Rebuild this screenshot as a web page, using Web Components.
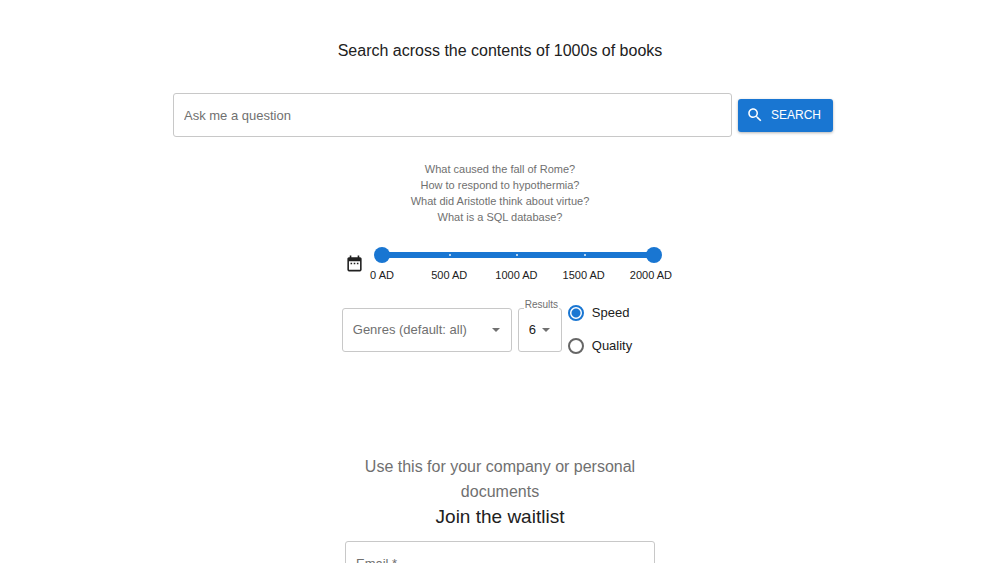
<!DOCTYPE html>
<html lang="en">
<head>
<meta charset="utf-8">
<meta name="viewport" content="width=device-width, initial-scale=1">
<title>Book search</title>
<style>
body {
  margin: 0;
  background: #fff;
  color: #212121;
  font-family: "Liberation Sans", Arial, Helvetica, sans-serif;
  --blue: #1976d2;
  --muted: #707070;
  --outline: #c8c8c8;
}
</style>
</head>
<body>
<book-search-page></book-search-page>

<script>
const base = `
  *, *::before, *::after { box-sizing: border-box; }
  input, select, button { font: inherit; color: inherit; margin: 0; }
`;

function define(name, html, setup) {
  const template = document.createElement('template');
  template.innerHTML = html;
  customElements.define(name, class extends HTMLElement {
    constructor() {
      super();
      this.attachShadow({ mode: 'open' }).append(template.content.cloneNode(true));
      if (setup) setup(this, this.shadowRoot);
    }
  });
}

define('outlined-input', `
  <style>${base}
    :host { display: block; }
    input {
      display: block; width: 100%; height: 44px; padding: 0 10px;
      border: 1px solid var(--outline); border-radius: 3px;
      background: transparent; font-size: 13px; outline-color: var(--blue);
    }
    input::placeholder { color: var(--muted); opacity: 1; }
  </style>
  <input type="text">
`, (host, root) => {
  const input = root.querySelector('input');
  const text = host.getAttribute('label');
  input.placeholder = text;
  input.setAttribute('aria-label', text);
  if (host.hasAttribute('type')) input.type = host.getAttribute('type');
});

define('search-button', `
  <style>${base}
    :host { display: block; }
    button {
      display: flex; align-items: center; gap: 7px; height: 33px; padding: 0 12px 0 8px;
      border: 0; border-radius: 3px; background: var(--blue); color: #fff;
      font-size: 12px; text-transform: uppercase; cursor: pointer;
      box-shadow: 0 1px 3px rgba(0,0,0,.3);
    }
    svg { width: 18px; height: 18px; fill: currentColor; }
  </style>
  <button type="submit">
    <svg viewBox="0 0 24 24" aria-hidden="true"><path d="M15.5 14h-.79l-.28-.27C15.41 12.59 16 11.11 16 9.5 16 5.91 13.09 3 9.5 3S3 5.91 3 9.5 5.91 16 9.5 16c1.61 0 3.09-.59 4.23-1.57l.27.28v.79l5 4.99L20.49 19l-4.99-5zm-6 0C7.01 14 5 11.99 5 9.5S7.01 5 9.5 5 14 7.01 14 9.5 11.99 14 9.5 14z"/></svg>
    <slot></slot>
  </button>
`);

define('sample-question', `
  <style>${base}
    :host { display: block; }
    button {
      display: block; border: 0; padding: 0; background: none; color: var(--muted);
      font-size: 11px; line-height: 16px; cursor: pointer;
    }
  </style>
  <button type="button"><slot></slot></button>
`);

define('year-range', `
  <style>${base}
    :host { display: block; }
    .slider { position: relative; height: 16px; }
    .track {
      position: absolute; inset: 5px 8px; border-radius: 3px; background: var(--blue);
    }
    .scale { display: grid; grid-template-columns: repeat(4, 500fr) 23fr; }
    .track .scale { height: 100%; align-items: center; }
    .tick { width: 2px; height: 2px; background: #b4d2ef; }
    .tick:first-child, .tick:last-child { visibility: hidden; }
    input {
      position: absolute; inset: 0; width: 100%; height: 16px;
      appearance: none; background: none; pointer-events: none;
    }
    input::-webkit-slider-thumb {
      appearance: none; width: 16px; height: 16px; border-radius: 50%;
      background: var(--blue); pointer-events: auto; cursor: pointer;
    }
    .labels { margin: 5px 8px 0; font-size: 11px; line-height: 14px; white-space: nowrap; }
    .labels span { display: flex; justify-content: center; width: 0; }
  </style>
  <div class="slider">
    <div class="track"><div class="scale">
      <i class="tick"></i><i class="tick"></i><i class="tick"></i><i class="tick"></i><i class="tick"></i>
    </div></div>
    <input type="range" min="0" max="2023" value="0" aria-label="Earliest year">
    <input type="range" min="0" max="2023" value="2023" aria-label="Latest year">
  </div>
  <div class="scale labels">
    <span>0 AD</span><span>500 AD</span><span>1000 AD</span><span>1500 AD</span><span>2000 AD</span>
  </div>
`, (host, root) => {
  const [low, high] = root.querySelectorAll('input');
  low.addEventListener('input', () => { if (+low.value > +high.value) low.value = high.value; });
  high.addEventListener('input', () => { if (+high.value < +low.value) high.value = low.value; });
});

const arrow = `<svg viewBox="0 0 10 5" aria-hidden="true"><path d="M0 0l5 5 5-5z"/></svg>`;
const selectStyle = `
  :host { display: block; }
  .box { display: grid; align-items: center; position: relative; }
  .box > select, .box > svg { grid-area: 1 / 1; }
  select {
    appearance: none; width: 100%; height: 44px; padding: 0 10px;
    border: 1px solid var(--outline); border-radius: 3px; background: transparent;
    font-size: 13px; outline-color: var(--blue);
  }
  svg { justify-self: end; width: 8px; height: 4px; margin-right: 12px; fill: #707070; pointer-events: none; }
`;

define('genre-select', `
  <style>${base}${selectStyle} select { color: var(--muted); }</style>
  <div class="box">
    <select aria-label="Genres">
      <option>Genres (default: all)</option><option>Fiction</option><option>History</option><option>Science</option>
    </select>${arrow}
  </div>
`);

define('results-select', `
  <style>${base}${selectStyle}
    label {
      position: absolute; top: -8px; left: 6px; padding: 0 1px; background: #fff;
      color: var(--muted); font-size: 10px; line-height: 10px;
    }
  </style>
  <div class="box">
    <select id="count"><option>6</option><option>9</option></select>${arrow}
    <label for="count">Results</label>
  </div>
`);

define('mode-choice', `
  <style>${base}
    :host { display: grid; gap: 17px; }
    label { display: flex; align-items: center; gap: 8px; font-size: 13px; line-height: 16px; }
    input {
      appearance: none; width: 16px; height: 16px; border: 2px solid #666;
      border-radius: 50%; background: #fff;
    }
    input:checked { border-color: var(--blue); background: radial-gradient(circle, var(--blue) 0 4px, #fff 5px); }
  </style>
  <label><input type="radio" name="mode" checked>Speed</label>
  <label><input type="radio" name="mode">Quality</label>
`);

define('waitlist-form', `
  <style>${base}
    :host { display: block; width: 310px; max-width: 100%; text-align: center; }
    p, h2 { margin: 0; line-height: 25px; font-weight: 400; }
    p { color: var(--muted); font-size: 16px; }
    h2 { font-size: 19px; margin-bottom: 12px; }
  </style>
  <p>Use this for your company or personal documents</p>
  <h2>Join the waitlist</h2>
  <outlined-input type="email" label="Email *"></outlined-input>
`);

define('book-search-page', `
  <style>${base}
    :host { display: block; }
    main { display: flex; flex-direction: column; align-items: center; padding-top: 41px; }
    h1 { margin: 0 0 32px; font-size: 16px; line-height: 20px; font-weight: 400; }
    form { display: flex; align-items: center; gap: 6px; width: calc(66% + 6px); min-width: 300px; padding-left: 6px; }
    form outlined-input { flex: 1; }
    .samples { display: flex; flex-direction: column; align-items: center; margin-top: 24px; }
    .years { display: flex; align-items: flex-start; gap: 10px; margin-top: 22px; padding-left: 7px; }
    .years svg { width: 19px; height: 19px; margin-top: 7px; fill: #212121; }
    year-range { width: 288px; }
    .filters { display: flex; align-items: center; gap: 6px; margin-top: 23px; padding-right: 26px; }
    genre-select { width: 170px; }
    results-select { width: 44px; }
    waitlist-form { margin-top: 100px; }
  </style>
  <main>
    <h1>Search across the contents of 1000s of books</h1>
    <form onsubmit="return false">
      <outlined-input label="Ask me a question"></outlined-input>
      <search-button>Search</search-button>
    </form>
    <div class="samples">
      <sample-question>What caused the fall of Rome?</sample-question>
      <sample-question>How to respond to hypothermia?</sample-question>
      <sample-question>What did Aristotle think about virtue?</sample-question>
      <sample-question>What is a SQL database?</sample-question>
    </div>
    <div class="years">
      <svg viewBox="0 0 24 24" aria-hidden="true"><path d="M9 11H7v2h2v-2zm4 0h-2v2h2v-2zm4 0h-2v2h2v-2zm2-7h-1V2h-2v2H8V2H6v2H5c-1.11 0-1.99.9-1.99 2L3 20c0 1.1.89 2 2 2h14c1.1 0 2-.9 2-2V6c0-1.1-.9-2-2-2zm0 16H5V9h14v11z"/></svg>
      <year-range></year-range>
    </div>
    <div class="filters">
      <genre-select></genre-select>
      <results-select></results-select>
      <mode-choice></mode-choice>
    </div>
    <waitlist-form></waitlist-form>
  </main>
`);
</script>
</body>
</html>
